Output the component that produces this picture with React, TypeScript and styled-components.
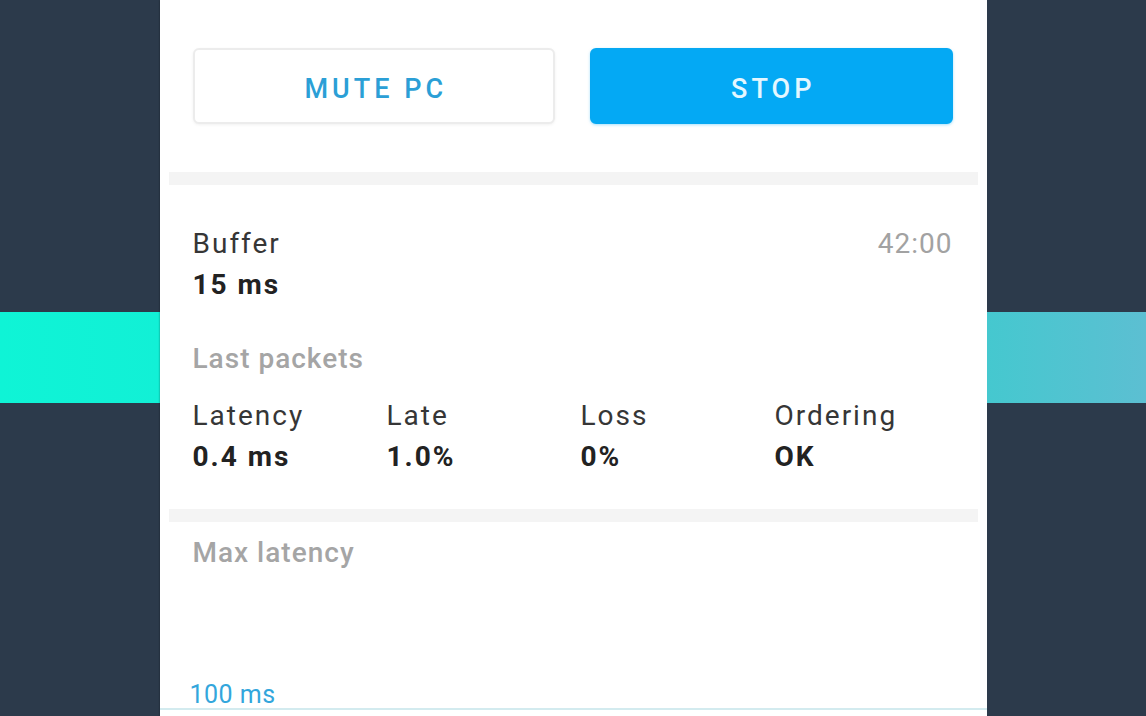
import React from "react";
import styled, { createGlobalStyle } from "styled-components";

const GlobalStyle = createGlobalStyle`
  html, body {
    margin: 0;
    padding: 0;
    background: #2c3a4b;
  }
  body {
    font-family: Roboto, "Liberation Sans", sans-serif;
    -webkit-font-smoothing: antialiased;
  }
`;

type Metric = { label: string; value: string };

const lastPackets: Metric[] = [
  { label: "Latency", value: "0.4 ms" },
  { label: "Late", value: "1.0%" },
  { label: "Loss", value: "0%" },
  { label: "Ordering", value: "OK" },
];

export default function App() {
  return (
    <>
      <GlobalStyle />
      <Page>
        <Side $band="#0ff4d6" $bandEnd="#12f0d6" style={{ width: 160 }} />
        <Card>
          <ButtonRow>
            <ActionButton>MUTE PC</ActionButton>
            <ActionButton $primary>STOP</ActionButton>
          </ButtonRow>

          <Divider />

          <Section>
            <StatRow>
              <div>
                <Label>Buffer</Label>
                <Value>15 ms</Value>
              </div>
              <Timer>42:00</Timer>
            </StatRow>

            <Caption>Last packets</Caption>
            <MetricGrid>
              {lastPackets.map((m) => (
                <div key={m.label}>
                  <Label>{m.label}</Label>
                  <Value>{m.value}</Value>
                </div>
              ))}
            </MetricGrid>
          </Section>

          <Divider />

          <ChartSection>
            <ChartTitle>Max latency</ChartTitle>
            <Chart>
              <AxisLabel>100 ms</AxisLabel>
            </Chart>
          </ChartSection>
        </Card>
        <Side $band="#45c8cf" $bandEnd="#5cbfd2" />
      </Page>
    </>
  );
}

const Page = styled.div`
  display: flex;
  height: 100vh;
  overflow: hidden;
  background: #2c3a4b;
`;

// band running behind the card
const Side = styled.div<{ $band: string; $bandEnd: string }>`
  flex: 1;
  background-color: #2c3a4b;
  background-image: linear-gradient(
    to right,
    ${(p) => p.$band},
    ${(p) => p.$bandEnd}
  );
  background-repeat: no-repeat;
  background-size: 100% 91px;
  background-position: 0 312px;
`;

const Card = styled.div`
  width: 827px;
  flex-shrink: 0;
  background: #fff;
  display: flex;
  flex-direction: column;
  box-shadow: 0 0 2px rgba(0, 0, 0, 0.45);
`;

const ButtonRow = styled.div`
  display: grid;
  grid-template-columns: 1fr 1fr;
  gap: 35px;
  padding: 48px 34px 48px 33px;
`;

const ActionButton = styled.button<{ $primary?: boolean }>`
  height: 76px;
  padding: 5px 0 0 4px;
  border-radius: 6px;
  font-family: Roboto, "Liberation Sans", sans-serif;
  font-size: 27px;
  font-weight: 500;
  letter-spacing: 4px;
  cursor: pointer;
  border: 2px solid ${(p) => (p.$primary ? "#06a8f2" : "#ececec")};
  background: ${(p) => (p.$primary ? "#04a9f4" : "#fff")};
  color: ${(p) => (p.$primary ? "#e4f7ff" : "#2b9fd6")};
  box-shadow: ${(p) =>
    p.$primary
      ? "0 1px 3px rgba(4, 169, 244, 0.35)"
      : "0 1px 3px rgba(0, 0, 0, 0.06)"};
`;

const Divider = styled.div`
  height: 13px;
  margin: 0 9px;
  background: #f4f4f4;
`;

const Section = styled.div`
  padding: 38px 34px 32px 33px;
`;

const StatRow = styled.div`
  display: flex;
  justify-content: space-between;
  align-items: flex-start;
`;

const Label = styled.div`
  font-size: 28px;
  line-height: 41px;
  letter-spacing: 2px;
  color: #363636;
`;

const Value = styled.div`
  font-size: 28px;
  line-height: 41px;
  letter-spacing: 2px;
  font-weight: 700;
  color: #222;
`;

const Timer = styled.div`
  font-size: 28px;
  line-height: 41px;
  letter-spacing: 1px;
  color: #a2a2a2;
`;

const Caption = styled.div`
  margin-top: 34px;
  margin-bottom: 16px;
  font-size: 28px;
  line-height: 40px;
  letter-spacing: 1px;
  font-weight: 500;
  color: #a5a5a5;
`;

const MetricGrid = styled.div`
  display: grid;
  grid-template-columns: repeat(4, 194px);
`;

const ChartSection = styled.div`
  padding-top: 11px;
`;

const ChartTitle = styled(Caption)`
  margin: 0;
  padding-left: 33px;
`;

const Chart = styled.div`
  height: 135px;
  display: flex;
  align-items: flex-end;
  border-bottom: 2px solid #d3ebef;
  padding-left: 30px;
`;

const AxisLabel = styled.div`
  font-size: 25px;
  line-height: 26px;
  letter-spacing: 0.5px;
  color: #33a6dc;
`;
